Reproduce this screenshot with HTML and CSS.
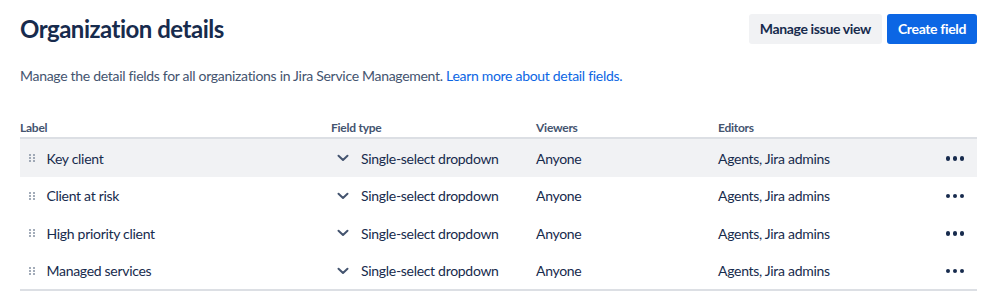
FILE: index.html
```html
<!DOCTYPE html>
<html lang="en">
<head>
<meta charset="utf-8">
<title>Organization details</title>
<link rel="stylesheet" href="styles.css">
</head>
<body>
<div class="page">
  <header class="page-header">
    <h1 class="title">Organization details</h1>
    <div class="actions">
      <button class="btn btn-default">Manage issue view</button>
      <button class="btn btn-primary">Create field</button>
    </div>
  </header>
  <p class="desc">Manage the detail fields for all organizations in Jira Service Management. <a class="link" href="#">Learn more about detail fields.</a></p>
  <div class="table">
    <div class="row head">
      <div class="cell">Label</div>
      <div class="cell">Field type</div>
      <div class="cell">Viewers</div>
      <div class="cell">Editors</div>
      <div class="cell"></div>
    </div>
    <div class="row body hover">
      <div class="cell label"><span class="handle"><i></i><i></i><i></i><i></i><i></i><i></i></span>Key client</div>
      <div class="cell type"><svg class="chev" width="12" height="8" viewBox="0 0 12 8"><path d="M1.5 1.8 L6 6 L10.5 1.8" fill="none" stroke="#44546F" stroke-width="2" stroke-linecap="round" stroke-linejoin="round"/></svg>Single-select dropdown</div>
      <div class="cell">Anyone</div>
      <div class="cell">Agents, Jira admins</div>
      <div class="cell more"><span class="dots"><i></i><i></i><i></i></span></div>
    </div>
    <div class="row body">
      <div class="cell label"><span class="handle"><i></i><i></i><i></i><i></i><i></i><i></i></span>Client at risk</div>
      <div class="cell type"><svg class="chev" width="12" height="8" viewBox="0 0 12 8"><path d="M1.5 1.8 L6 6 L10.5 1.8" fill="none" stroke="#44546F" stroke-width="2" stroke-linecap="round" stroke-linejoin="round"/></svg>Single-select dropdown</div>
      <div class="cell">Anyone</div>
      <div class="cell">Agents, Jira admins</div>
      <div class="cell more"><span class="dots"><i></i><i></i><i></i></span></div>
    </div>
    <div class="row body">
      <div class="cell label"><span class="handle"><i></i><i></i><i></i><i></i><i></i><i></i></span>High priority client</div>
      <div class="cell type"><svg class="chev" width="12" height="8" viewBox="0 0 12 8"><path d="M1.5 1.8 L6 6 L10.5 1.8" fill="none" stroke="#44546F" stroke-width="2" stroke-linecap="round" stroke-linejoin="round"/></svg>Single-select dropdown</div>
      <div class="cell">Anyone</div>
      <div class="cell">Agents, Jira admins</div>
      <div class="cell more"><span class="dots"><i></i><i></i><i></i></span></div>
    </div>
    <div class="row body last">
      <div class="cell label"><span class="handle"><i></i><i></i><i></i><i></i><i></i><i></i></span>Managed services</div>
      <div class="cell type"><svg class="chev" width="12" height="8" viewBox="0 0 12 8"><path d="M1.5 1.8 L6 6 L10.5 1.8" fill="none" stroke="#44546F" stroke-width="2" stroke-linecap="round" stroke-linejoin="round"/></svg>Single-select dropdown</div>
      <div class="cell">Anyone</div>
      <div class="cell">Agents, Jira admins</div>
      <div class="cell more"><span class="dots"><i></i><i></i><i></i></span></div>
    </div>
  </div>
</div>
</body>
</html>
```

FILE: styles.css
```css
* { box-sizing: border-box; }
html, body { margin: 0; padding: 0; background: #fff; }
body {
  font-family: Lato, "Liberation Sans", sans-serif;
  color: #172B4D;
  font-size: 14px;
  letter-spacing: -0.3px;
}
.page { padding: 14px 22px 0 20px; }
.page-header {
  display: flex;
  justify-content: space-between;
  align-items: center;
  height: 30px;
}
.title {
  margin: 0;
  font-size: 24px;
  font-weight: 700;
  line-height: 28px;
  letter-spacing: -0.5px;
  color: #172B4D;
}
.actions { display: flex; gap: 5px; }
.btn {
  font-family: inherit;
  font-size: 14px;
  font-weight: 700;
  letter-spacing: -0.35px;
  height: 30px;
  border: none;
  border-radius: 3px;
  padding: 0 11px;
  line-height: 30px;
  white-space: nowrap;
}
.btn-default { background: #F1F2F4; color: #172B4D; }
.btn-primary { background: #0C66E4; color: #fff; }
.desc {
  margin: 22px 0 0;
  line-height: 20px;
  color: #44546F;
}
.link { color: #0C66E4; text-decoration: none; }
.table { margin-top: 34px; }
.row {
  display: grid;
  grid-template-columns: 311px 205px 182px 1fr 60px;
  align-items: center;
}
.row.head {
  height: 19px;
  border-bottom: 2px solid #DCDFE4;
  font-size: 12px;
  font-weight: 700;
  letter-spacing: -0.25px;
  color: #44546F;
  align-items: start;
}
.row.body { height: 37.5px; padding-top: 1px; }
.row.hover { background: #F1F2F4; }
.row.last { border-bottom: 2px solid #DCDFE4; height: 39.5px; }
.cell { display: flex; align-items: center; white-space: nowrap; }
.label { padding-left: 8px; }
.handle {
  display: grid;
  grid-template-columns: 2px 2px;
  grid-template-rows: 2px 2px 2px;
  column-gap: 2px;
  row-gap: 1px;
  margin-right: 12px;
  margin-left: 0.5px;
}
.handle i { display: block; width: 2px; height: 2px; background: #8590A2; border-radius: 1px; }
.type .chev { margin: 0 12px 0 6px; }
.more { justify-content: flex-end; padding-right: 13px; }
.dots { display: flex; gap: 2.5px; }
.dots i { display: block; width: 4.5px; height: 4.5px; border-radius: 50%; background: #172B4D; }
```
